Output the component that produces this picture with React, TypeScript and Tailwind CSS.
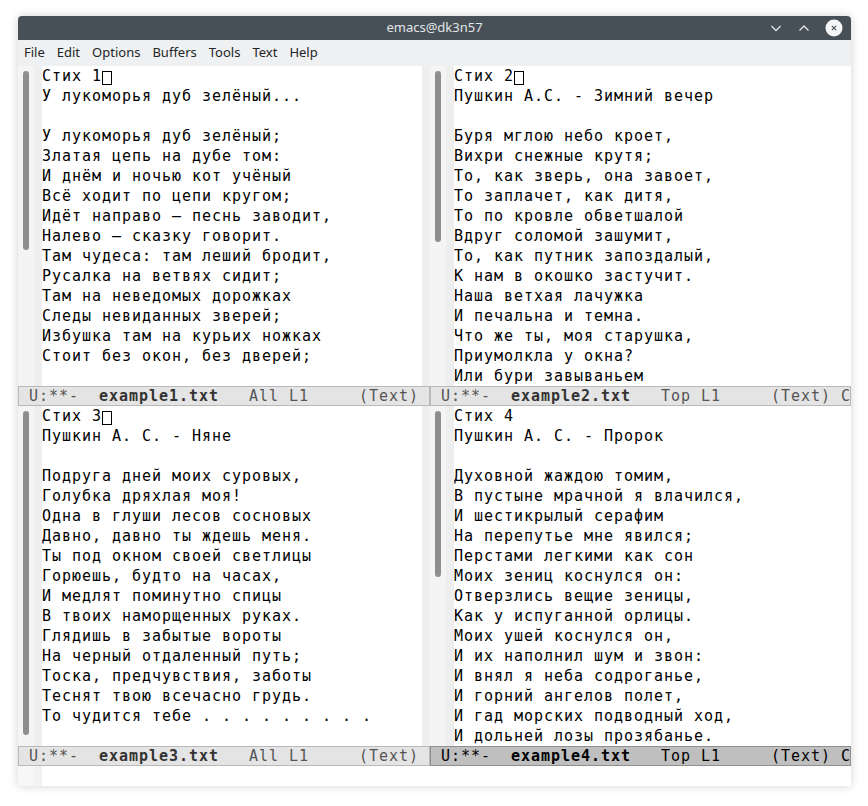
import React from "react";

type PaneProps = {
  lines: string[];
  cursor?: boolean;
  thumbClass: string;
  heightClass: string;
  right?: boolean;
};

const mono = "font-['DejaVu_Sans_Mono',monospace] text-[15px] tracking-[0.97px]";

function Pane({ lines, cursor, thumbClass, heightClass, right }: PaneProps) {
  return (
    <div className={`flex ${heightClass}`}>
      <div className="w-[16px] shrink-0 bg-[#f4f4f4] pt-[5px] pl-[5px]">
        <div className={`w-[6px] rounded-full bg-[#8e8e8e] ${thumbClass}`} />
      </div>
      <div className="w-[8px] shrink-0 bg-[#eeeeee]" />
      <div className={`flex-1 min-w-0 overflow-hidden bg-white text-black ${mono}`}>
        {lines.map((l, i) => (
          <div key={i} className="h-[20px] leading-[20px] whitespace-pre">
            {l}
            {i === 0 && cursor ? (
              <span className="inline-block w-[10px] h-[14px] border border-black align-[-4px]" />
            ) : null}
          </div>
        ))}
      </div>
      {!right && <div className="w-[8px] shrink-0 bg-[#eeeeee]" />}
    </div>
  );
}

function ModeLine({ file, pos, active, extra }: { file: string; pos: string; active?: boolean; extra?: string }) {
  const cls = active
    ? "bg-[#bfbfbf] border-[#8f8f8f] text-black"
    : "bg-[#e4e4e4] border-[#b9b9b9] text-[#555555]";
  return (
    <div className={`h-[20px] border leading-[18px] whitespace-pre overflow-hidden ${cls} ${mono}`}>
      {" U:**-  "}
      <span className={`font-bold ${active ? "text-black" : "text-[#333333]"}`}>{file}</span>
      {`   ${pos} L1     (Text)${extra ?? ""}`}
    </div>
  );
}

const p1 = [
  "Стих 1",
  "У лукоморья дуб зелёный...",
  "",
  "У лукоморья дуб зелёный;",
  "Златая цепь на дубе том:",
  "И днём и ночью кот учёный",
  "Всё ходит по цепи кругом;",
  "Идёт направо — песнь заводит,",
  "Налево — сказку говорит.",
  "Там чудеса: там леший бродит,",
  "Русалка на ветвях сидит;",
  "Там на неведомых дорожках",
  "Следы невиданных зверей;",
  "Избушка там на курьих ножках",
  "Стоит без окон, без дверей;",
];

const p2 = [
  "Стих 2",
  "Пушкин А.С. - Зимний вечер",
  "",
  "Буря мглою небо кроет,",
  "Вихри снежные крутя;",
  "То, как зверь, она завоет,",
  "То заплачет, как дитя,",
  "То по кровле обветшалой",
  "Вдруг соломой зашумит,",
  "То, как путник запоздалый,",
  "К нам в окошко застучит.",
  "Наша ветхая лачужка",
  "И печальна и темна.",
  "Что же ты, моя старушка,",
  "Приумолкла у окна?",
  "Или бури завываньем",
];

const p3 = [
  "Стих 3",
  "Пушкин А. С. - Няне",
  "",
  "Подруга дней моих суровых,",
  "Голубка дряхлая моя!",
  "Одна в глуши лесов сосновых",
  "Давно, давно ты ждешь меня.",
  "Ты под окном своей светлицы",
  "Горюешь, будто на часах,",
  "И медлят поминутно спицы",
  "В твоих наморщенных руках.",
  "Глядишь в забытые вороты",
  "На черный отдаленный путь;",
  "Тоска, предчувствия, заботы",
  "Теснят твою всечасно грудь.",
  "То чудится тебе . . . . . . . . .",
];

const p4 = [
  "Стих 4",
  "Пушкин А. С. - Пророк",
  "",
  "Духовной жаждою томим,",
  "В пустыне мрачной я влачился,",
  "И шестикрылый серафим",
  "На перепутье мне явился;",
  "Перстами легкими как сон",
  "Моих зениц коснулся он:",
  "Отверзлись вещие зеницы,",
  "Как у испуганной орлицы.",
  "Моих ушей коснулся он,",
  "И их наполнил шум и звон:",
  "И внял я неба содроганье,",
  "И горний ангелов полет,",
  "И гад морских подводный ход,",
  "И дольней лозы прозябанье.",
];

export default function App() {
  const menu = ["File", "Edit", "Options", "Buffers", "Tools", "Text", "Help"];
  return (
    <div className="w-[868px] h-[806px] bg-white pt-[16px] pl-[18px]">
      <div className="w-[833px] h-[770px] flex flex-col shadow-[0_0_10px_rgba(0,0,0,0.18)] rounded-t-[4px]">
        {/* title bar */}
        <div className="h-[24px] bg-[#475057] rounded-t-[4px] flex items-center relative font-['Noto_Sans',sans-serif] text-[13px] text-[#e3e5e7]">
          <div className="flex-1 text-center pl-[0px]">emacs@dk3n57</div>
          <div className="absolute right-[8px] top-0 h-[24px] flex items-center gap-[14px]">
            <svg width="14" height="14" viewBox="0 0 14 14">
              <path d="M2.5 5 L7 9.5 L11.5 5" fill="none" stroke="#e3e5e7" strokeWidth="1.3" />
            </svg>
            <svg width="14" height="14" viewBox="0 0 14 14">
              <path d="M2.5 9.5 L7 5 L11.5 9.5" fill="none" stroke="#e3e5e7" strokeWidth="1.3" />
            </svg>
            <svg width="18" height="18" viewBox="0 0 18 18">
              <circle cx="9" cy="9" r="8.5" fill="#f5f6f7" />
              <path d="M6.8 6.8 L11.2 11.2 M11.2 6.8 L6.8 11.2" stroke="#475057" strokeWidth="1.1" />
            </svg>
          </div>
        </div>
        {/* menu bar */}
        <div className="h-[26px] bg-[#eff0f1] flex items-center font-['Noto_Sans',sans-serif] text-[13px] text-[#232627]">
          {menu.map((m) => (
            <span key={m} className="px-[6px]">
              {m}
            </span>
          ))}
        </div>
        {/* panes */}
        <div className="flex">
          <div className="w-[412px] flex flex-col">
            <Pane lines={p1} cursor thumbClass="h-[179px]" heightClass="h-[320px]" />
            <ModeLine file="example1.txt" pos="All" />
            <Pane lines={p3} cursor thumbClass="h-[324px]" heightClass="h-[340px]" />
            <ModeLine file="example3.txt" pos="All" />
          </div>
          <div className="w-[421px] flex flex-col">
            <Pane lines={p2} cursor thumbClass="h-[171px]" heightClass="h-[320px]" right />
            <ModeLine file="example2.txt" pos="Top" extra=" Com" />
            <Pane lines={p4} thumbClass="h-[166px]" heightClass="h-[340px]" right />
            <ModeLine file="example4.txt" pos="Top" active extra=" Com" />
          </div>
        </div>
        {/* echo area */}
        <div className="h-[20px] flex bg-white">
          <div className="w-[16px] bg-[#f7f7f7]" />
          <div className="w-[8px] bg-[#f2f2f2]" />
          <div className="flex-1 bg-white" />
        </div>
      </div>
    </div>
  );
}
